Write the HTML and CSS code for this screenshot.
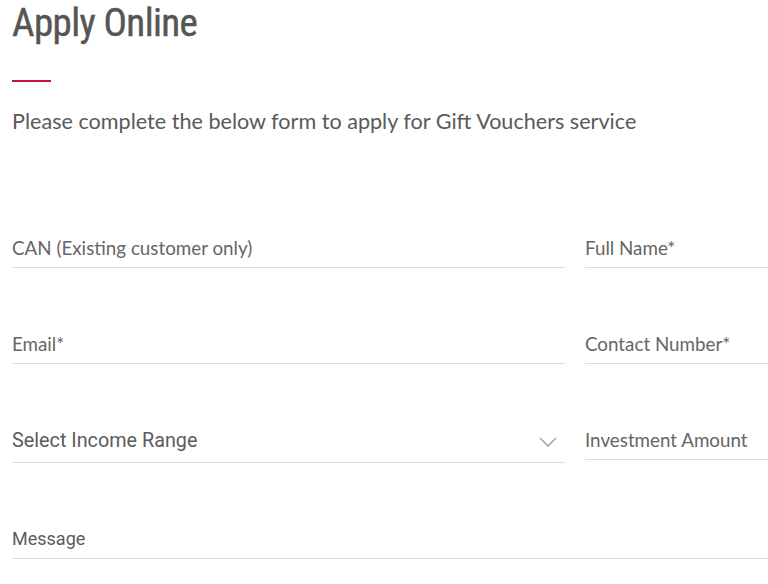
FILE: index.html
```html
<!DOCTYPE html>
<html lang="en">
<head>
  <meta charset="UTF-8" />
  <title>Apply Online</title>
  <link rel="stylesheet" href="styles.css">
</head>
<body>
  <div class="page">
    <!-- Heading -->
    <h1 class="title">Apply Online</h1>
    <div class="title-bar"></div>
    <p class="intro">Please complete the below form to apply for Gift Vouchers service</p>

    <!-- Form -->
    <form class="apply-form">
      <div class="field"><span class="label">CAN (Existing customer only)</span></div>
      <div class="field"><span class="label">Full Name*</span></div>

      <div class="field"><span class="label">Email*</span></div>
      <div class="field"><span class="label">Contact Number*</span></div>

      <div class="field field-select">
        <span class="label label-select">Select Income Range</span>
        <svg class="chevron" width="18" height="10" viewBox="0 0 18 10">
          <polyline points="1,1 9,9 17,1" fill="none" stroke="#9a9a9a" stroke-width="1.3" />
        </svg>
      </div>
      <div class="field field-short"><span class="label">Investment Amount</span></div>

      <div class="field field-wide"><span class="label label-plain">Message</span></div>
    </form>
  </div>
</body>
</html>
```

FILE: styles.css
```css
body {
  margin: 0;
  background: #fff;
  overflow: hidden;
  font-family: Lato, "Noto Sans", sans-serif;
  color: #5a5a5a;
}

.page {
  padding: 0 12px;
  width: 1126px;
}

/* Heading */
.title {
  margin: 0;
  padding-top: 2px;
  font-family: "Roboto Condensed", "Liberation Sans Narrow", "DejaVu Sans Condensed", sans-serif;
  font-weight: 400;
  font-size: 39px;
  line-height: 42px;
  color: #555;
  letter-spacing: -0.6px;
  -webkit-text-stroke: 0.4px #555;
}

.title-bar {
  width: 39px;
  height: 2px;
  margin-top: 36px;
  background: #c2133f;
}

.intro {
  margin: 25px 0 0;
  font-size: 21.6px;
  line-height: 28px;
  color: #5a5a5a;
}

/* Form */
.apply-form {
  display: grid;
  grid-template-columns: 553px 553px;
  column-gap: 20px;
  row-gap: 56px;
  margin-top: 93px;
}

.field {
  height: 40px;
  box-sizing: border-box;
  padding-bottom: 9px;
  border-bottom: 1px solid #dcdcdc;
  display: flex;
  align-items: flex-end;
  justify-content: space-between;
}

.field-select {
  height: 43px;
  padding-bottom: 11px;
}

.field-short {
  height: 40px;
  padding-bottom: 9px;
}

.field-wide {
  grid-column: 1 / -1;
  height: 40px;
}

.label {
  font-size: 18.8px;
  line-height: 20px;
  color: #666;
}

.label-select,
.label-plain {
  font-family: Roboto, "Liberation Sans", sans-serif;
  color: #5c5c5c;
}

.label-select {
  font-size: 19.8px;
}

.label-plain {
  font-size: 18px;
}

.chevron {
  margin: 0 8px 4px 0;
}
```
